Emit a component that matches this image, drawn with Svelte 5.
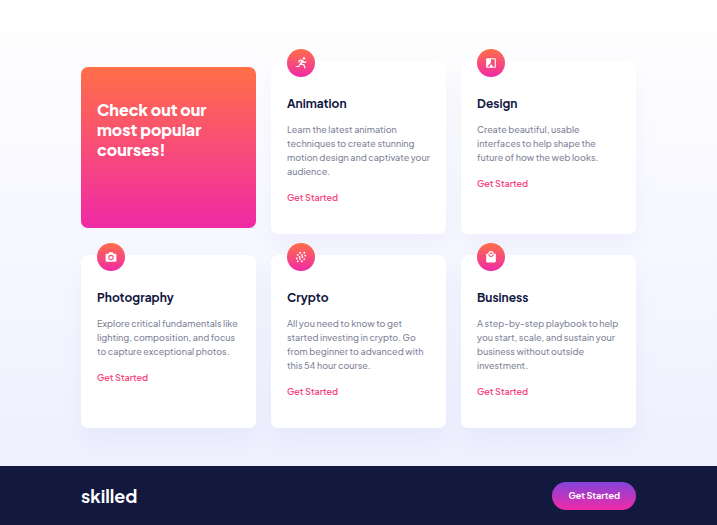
<script>
  const courses = [
    { title: 'Animation', icon: 'run', text: 'Learn the latest animation techniques to create stunning motion design and captivate your audience.' },
    { title: 'Design', icon: 'shape', text: 'Create beautiful, usable interfaces to help shape the future of how the web looks.' },
    { title: 'Photography', icon: 'camera', text: 'Explore critical fundamentals like lighting, composition, and focus to capture exceptional photos.' },
    { title: 'Crypto', icon: 'dots', text: 'All you need to know to get started investing in crypto. Go from beginner to advanced with this 54 hour course.' },
    { title: 'Business', icon: 'bag', text: 'A step-by-step playbook to help you start, scale, and sustain your business without outside investment.' }
  ];
  const viewBoxes = { run: '0 0 24 24', shape: '-1 -1 26 26', camera: '-1 -1 26 26', dots: '-3 -3 30 30', bag: '-1 -1 26 26' };
  const dots = [[10, 3], [19, 3], [5, 7.5], [14, 7.5], [21, 9], [9, 12], [15, 12], [3, 15], [10, 16.5], [19, 16.5], [5, 21], [14, 21]];
</script>

<div class="page">
  <main>
    <section class="promo">
      <h1>Check out our most popular courses!</h1>
    </section>
    {#each courses as course}
      <article class="card">
        <span class="badge">
          <svg viewBox={viewBoxes[course.icon]} aria-hidden="true">
            {#if course.icon === 'run'}
              <circle cx="17" cy="4" r="2" />
              <path d="M15.777 10.969a2.007 2.007 0 0 0 2.148.83l3.316-.829-.483-1.94-3.316.829-1.379-2.067a2.01 2.01 0 0 0-1.272-.854l-3.846-.77a1.998 1.998 0 0 0-2.181 1.067l-1.658 3.316 1.789.895 1.658-3.317 1.967.394L7.434 17H3v2h4.434c.698 0 1.355-.372 1.715-.971l1.918-3.196 5.169 1.034 1.816 5.449 1.896-.633-1.815-5.448a2.007 2.007 0 0 0-1.506-1.33l-3.039-.607 1.772-2.954.417.625z" />
            {:else if course.icon === 'shape'}
              <path fill-rule="evenodd" d="M5 3h14a2 2 0 0 1 2 2v14a2 2 0 0 1-2 2H5a2 2 0 0 1-2-2V5a2 2 0 0 1 2-2zM12 5v6L5 19h4l3-5 4 5h3V5z" />
            {:else if course.icon === 'camera'}
              <path fill-rule="evenodd" d="M9 3h6l2 3h3a2 2 0 0 1 2 2v11a2 2 0 0 1-2 2H4a2 2 0 0 1-2-2V8a2 2 0 0 1 2-2h3zM12 8a5 5 0 1 0 0 10 5 5 0 0 0 0-10z" />
              <circle cx="12" cy="13" r="3" />
            {:else if course.icon === 'dots'}
              {#each dots as [x, y]}
                <circle cx={x} cy={y} r="2" />
              {/each}
            {:else}
              <path fill-rule="evenodd" d="M7 6a5 5 0 0 1 10 0h4v14a2 2 0 0 1-2 2H5a2 2 0 0 1-2-2V6zM9 6h6a3 3 0 0 0-6 0zM7 7a5 5 0 0 0 10 0h-2a3 3 0 0 1-6 0z" />
            {/if}
          </svg>
        </span>
        <h2>{course.title}</h2>
        <p>{course.text}</p>
        <a href="#start">Get Started</a>
      </article>
    {/each}
  </main>
  <footer>
    <div class="bar">
      <div class="logo">skilled</div>
      <button type="button">Get Started</button>
    </div>
  </footer>
</div>

<style>
  :global(body) {
    margin: 0;
  }
  .page {
    min-height: 100vh;
    display: flex;
    flex-direction: column;
    font-family: "Plus Jakarta Sans", Inter, sans-serif;
    background: linear-gradient(#ffffff, #eef0ff 466px);
  }
  main {
    box-sizing: border-box;
    width: 100%;
    max-width: 587px;
    margin: 0 auto;
    padding: 61px 16px 38px;
    display: grid;
    grid-template-columns: repeat(3, minmax(0, 1fr));
    align-content: start;
    gap: 21px 15px;
  }
  .promo {
    margin: 6px 0;
    padding: 33px 16px;
    border-radius: 7px;
    background: linear-gradient(#ff6f48, #f02aa6);
  }
  h1 {
    margin: 0;
    color: #fff;
    font-size: 16px;
    line-height: 20px;
    font-weight: 800;
  }
  .card {
    position: relative;
    padding: 34px 14px 29px 16px;
    border-radius: 7px;
    background: #fff;
    box-shadow: 0 12px 24px rgba(6, 22, 141, 0.04);
    font-size: 9px;
    line-height: 14px;
  }
  .badge {
    position: absolute;
    top: -12px;
    left: 16px;
    width: 28px;
    height: 28px;
    display: grid;
    place-items: center;
    border-radius: 50%;
    background: linear-gradient(#ff6f48, #f02aa6);
  }
  svg {
    width: 14px;
    height: 14px;
    fill: #fff;
  }
  h2 {
    margin: 0 0 10px;
    color: #13183f;
    font-size: 12px;
    line-height: 18px;
    font-weight: 700;
  }
  p {
    margin: 0 0 12px;
    color: #83869a;
    font-weight: 500;
  }
  a {
    display: inline-block;
    color: #f74780;
    font-weight: 600;
    text-decoration: none;
  }
  footer {
    flex: 1;
    padding: 16px;
    background: #13183f;
  }
  .bar {
    max-width: 555px;
    margin: 0 auto;
    display: flex;
    align-items: center;
    justify-content: space-between;
  }
  .logo {
    color: #fff;
    font-size: 18px;
    line-height: 24px;
    font-weight: 700;
  }
  button {
    height: 28px;
    padding: 0 16px;
    border: 0;
    border-radius: 14px;
    background: linear-gradient(#8343db, #f02aa6);
    color: #fff;
    font-family: inherit;
    font-size: 9px;
    line-height: 14px;
    font-weight: 700;
  }
</style>
